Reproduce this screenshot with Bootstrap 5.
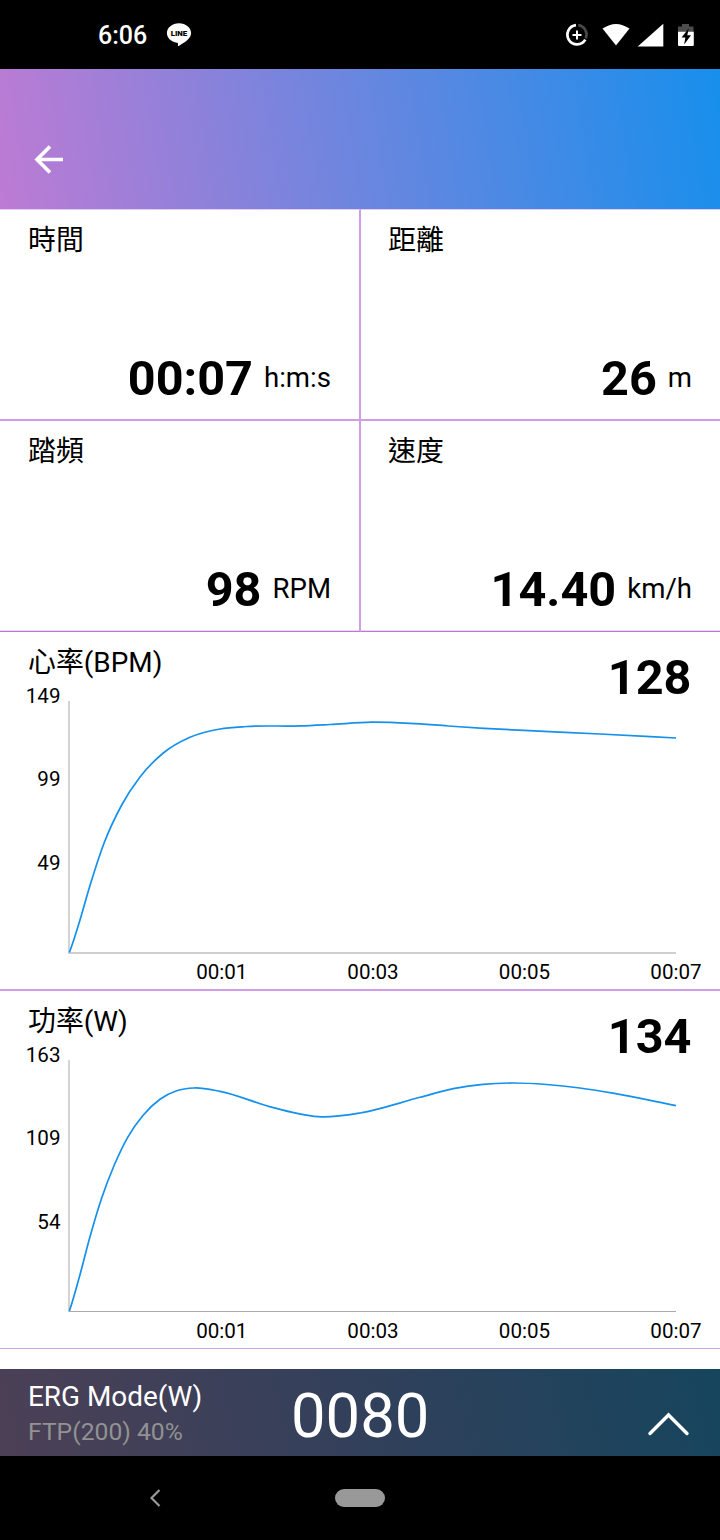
<!DOCTYPE html>
<html lang="zh-Hant">
<head>
<meta charset="utf-8">
<meta name="viewport" content="width=device-width, initial-scale=1">
<title>ERG Mode</title>
<link href="https://cdn.jsdelivr.net/npm/bootstrap@5.3.0/dist/css/bootstrap.min.css" rel="stylesheet">
<style>
  body { font-family: Roboto, "Noto Sans CJK TC", sans-serif; color: #000; background: #fff; width: 720px; height: 1540px; overflow: hidden; }
  svg { display: block; flex: none; overflow: visible; }
  .status-bar { height: 69px; padding: 0 25px 0 98px; }
  .clock { font-size: 25px; line-height: 30px; font-weight: 500; padding-top: 3px; }
  .app-header { height: 140px; padding: 76px 0 0 34px; background: linear-gradient(81deg, #bd7bd4, #6a86df 50%, #178fec); }
  .line-icon { margin-left: 19px; }
  .metric-row { grid-template-columns: 361px 359px; }
  .metric { height: 212px; padding: 11px 28px 11px; border-top: 1px solid #e6ccf2; border-bottom: 2px solid #cf9fe6; }
  .metric + .metric { padding-left: 27px; }
  .metric-split { border-right: 2px solid #cf9fe6; }
  .metric-row:last-child .metric { height: 211px; padding-bottom: 12px; border-top: 0; border-bottom: 1px solid #b97ad6; box-shadow: inset 0 -1px #ecd8f5; }
  .metric-label { font-size: 27.9px; line-height: 40px; }
  .metric-value { font-size: 48.6px; line-height: 58px; font-weight: 700; }
  .metric-unit { font-size: 27.6px; line-height: 56px; margin-left: 11px; }
  .metric-row .metric-value, .metric-row .metric-unit { height: 58px; }
  .chart-head { height: 52px; padding: 11px 28.5px 0 28px; }
  .chart-head .metric-value { margin-top: 6px; }
  .chart-panel { border-bottom: 2px solid #cf9fe6; }
  .chart-panel:last-of-type { border-bottom: 1px solid #cca5e6; }
  .chart-panel text { font-size: 20.6px; }
  .curve { fill: none; stroke: #1591ec; stroke-width: 1.7; }
  .erg-bar { height: 87px; margin-top: 20px; padding: 0 30px 0 28px; background: linear-gradient(77deg, #4c4056, #32405b 50%, #16455d); }
  .erg-info { width: 263px; padding-top: 3px; }
  .erg-title { font-size: 27.9px; line-height: 35px; }
  .erg-ftp { font-size: 24.7px; line-height: 36px; color: #929292; }
  .erg-value { font-size: 61.5px; line-height: 80px; padding-top: 6px; }
  .nav-strip { height: 84px; padding-left: 148px; }
  .home-pill { width: 50px; height: 18px; background: #999; margin-left: 174px; }
</style>
</head>
<body>
<header>
  <div class="status-bar bg-black text-white d-flex align-items-center">
    <span class="clock">6:06</span>
    <svg class="line-icon" width="26" height="26" viewBox="0 0 26 26">
      <path fill="#fff" d="M13 1.200C6.200 1.200.9 5.600.9 11.100c0 5 4.300 8.900 10.100 9.700 1.200.2 1.200.8.9 2.600-.1.700.3.900.9.5 4.500-2.500 12.300-6.600 12.300-12.800C25.100 5.600 19.700 1.200 13 1.200z"/>
      <text x="13" y="14" text-anchor="middle" font-size="8" font-weight="900" textLength="16.500" lengthAdjust="spacingAndGlyphs" fill="#000">LINE</text>
    </svg>
    <div class="d-flex align-items-center ms-auto">
      <svg class="me-2" width="29" height="24" viewBox="0 0 29 24" fill="none">
        <path stroke="#fff" stroke-width="2.700" d="M11 2.200a9.600 9.600 0 1 0 9.300 14.400"/>
        <path stroke="#484848" stroke-width="2.700" d="M13.200 2.200a9.600 9.600 0 0 1 7.600 13.200"/>
        <path stroke="#fff" stroke-width="2" d="M12 7.500v9M7.500 12h9"/>
      </svg>
      <svg width="35" height="24" viewBox="0 0 35 24"><path fill="#fff" d="M.5 5.600Q14-3.800 27.500 5.600L14 22.500z"/></svg>
      <svg width="40" height="24" viewBox="0 0 40 24"><path fill="#fff" d="M26.300.7v22.800H.7z"/></svg>
      <svg width="18" height="24" viewBox="0 0 18 24">
        <path fill="#4d4d4d" d="M5 1h7v2.500h4.500V9H1V3.500h4z"/>
        <path fill="#fff" d="M1 8.800h15.800v13.200q0 1-1 1H2q-1 0-1-1z"/>
        <path fill="#000" d="M11.800 5.200L4.600 14.500h3.700l-1.100 7 6.800-9.300h-3.700z"/>
      </svg>
    </div>
  </div>
  <div class="app-header">
    <svg width="30" height="30" viewBox="0 .5 30 30" fill="none" stroke="#fff" stroke-width="3.600"><path d="M16 2L3 15 16 28M3 15H29"/></svg>
  </div>
</header>
<main>
  <div>
    <div class="metric-row d-grid">
      <section class="metric metric-split d-flex flex-column justify-content-between">
        <div class="metric-label">時間</div>
        <div class="d-flex justify-content-end"><span class="metric-value">00:07</span><span class="metric-unit">h:m:s</span></div>
      </section>
      <section class="metric d-flex flex-column justify-content-between">
        <div class="metric-label">距離</div>
        <div class="d-flex justify-content-end"><span class="metric-value">26</span><span class="metric-unit">m</span></div>
      </section>
    </div>
    <div class="metric-row d-grid">
      <section class="metric metric-split d-flex flex-column justify-content-between">
        <div class="metric-label">踏頻</div>
        <div class="d-flex justify-content-end"><span class="metric-value">98</span><span class="metric-unit">RPM</span></div>
      </section>
      <section class="metric d-flex flex-column justify-content-between">
        <div class="metric-label">速度</div>
        <div class="d-flex justify-content-end"><span class="metric-value">14.40</span><span class="metric-unit">km/h</span></div>
      </section>
    </div>
  </div>
  <section class="chart-panel">
    <div class="chart-head d-flex justify-content-between align-items-start">
      <span class="metric-label">心率(BPM)</span><span class="metric-value">128</span>
    </div>
    <svg width="720" height="305" viewBox="0 -4 720 305">
      <path fill="#d4d4d4" d="M68 13h2v253h-2z"/><path fill="#cfcfcf" d="M69 264h607v2H69z"/>
      <path class="curve" data-points="69.300,264.500 79,235.300 90,197.500 104,155.300 121.700,117 140,89 163.300,65 190,49.300 220,41 246.700,38.500 300,37.900 330,36.500 372,34.200 410,35.300 448,38 484,40.400 524,42.400 600,46 676,50"/>
      <g text-anchor="end"><text x="60.500" y="14.500">149</text><text x="60.500" y="97.500">99</text><text x="60.500" y="181.500">49</text></g>
      <g text-anchor="middle"><text x="221.800" y="291">00:01</text><text x="373" y="291">00:03</text><text x="524.500" y="291">00:05</text><text x="676" y="291">00:07</text></g>
    </svg>
  </section>
  <section class="chart-panel">
    <div class="chart-head d-flex justify-content-between align-items-start">
      <span class="metric-label">功率(W)</span><span class="metric-value">134</span>
    </div>
    <svg width="720" height="305" viewBox="0 -4 720 305">
      <path fill="#d4d4d4" d="M68 13h2v252h-2z"/><path fill="#aaa" d="M69 264h607v1H69z"/>
      <path class="curve" data-points="69.300,264 79,231.300 90,189.700 101.700,151 114.300,118 127.700,90.300 142.700,68.700 160,52.300 176.700,43.800 194,41 220,44.300 273.300,60.700 321.700,69.900 360,66 420,50.300 453.300,41.700 483,37.300 513,36 546.700,37.500 580,41 613,46.200 676,58.700"/>
      <g text-anchor="end"><text x="60.500" y="14.500">163</text><text x="60.500" y="97.500">109</text><text x="60.500" y="181.500">54</text></g>
      <g text-anchor="middle"><text x="221.800" y="291">00:01</text><text x="373" y="291">00:03</text><text x="524.500" y="291">00:05</text><text x="676" y="291">00:07</text></g>
    </svg>
  </section>
</main>
<footer>
  <div class="erg-bar d-flex align-items-center text-white">
    <div class="erg-info"><div class="erg-title">ERG Mode(W)</div><div class="erg-ftp">FTP(200) 40%</div></div>
    <div class="erg-value">0080</div>
    <svg class="ms-auto mt-4" width="46" height="28" viewBox="0 0 46 28" fill="none" stroke="#fff" stroke-width="3.400" stroke-linecap="round"><path d="M6 22.500L24.500 4 43 22.500"/></svg>
  </div>
  <div class="nav-strip bg-black d-flex align-items-center">
    <svg width="13" height="20" viewBox="0 0 13 20" fill="none" stroke="#999" stroke-width="2.200"><path d="M11.500 2L3.500 10l8 8"/></svg>
    <span class="home-pill rounded-pill"></span>
  </div>
</footer>
<script src="https://cdn.jsdelivr.net/npm/bootstrap@5.3.0/dist/js/bootstrap.bundle.min.js"></script>
<script>
  // Join the points of each series with a smooth spline. The slope at a point is
  // that of the parabola through it and its neighbours, as spacing is uneven.
  document.querySelectorAll('.curve').forEach(function (el) {
    var p = el.dataset.points.split(' ').map(function (s) { return s.split(',').map(Number); });
    var chord = function (a, b) { return (b[1] - a[1]) / (b[0] - a[0]); };
    var slope = p.map(function (q, i) {
      if (i === 0) return chord(p[0], p[1]) + .6;
      if (i === p.length - 1) return chord(p[i - 1], q);
      var h1 = q[0] - p[i - 1][0], h2 = p[i + 1][0] - q[0];
      return (chord(p[i - 1], q) * h2 + chord(q, p[i + 1]) * h1) / (h1 + h2);
    });
    var d = 'M' + p[0];
    for (var i = 1; i < p.length; i++) {
      var b = p[i - 1], c = p[i], h = (c[0] - b[0]) / 3;
      d += 'C' + [b[0] + h, b[1] + h * slope[i - 1], c[0] - h, c[1] - h * slope[i], c[0], c[1]];
    }
    el.setAttribute('d', d);
  });
</script>
</body>
</html>
